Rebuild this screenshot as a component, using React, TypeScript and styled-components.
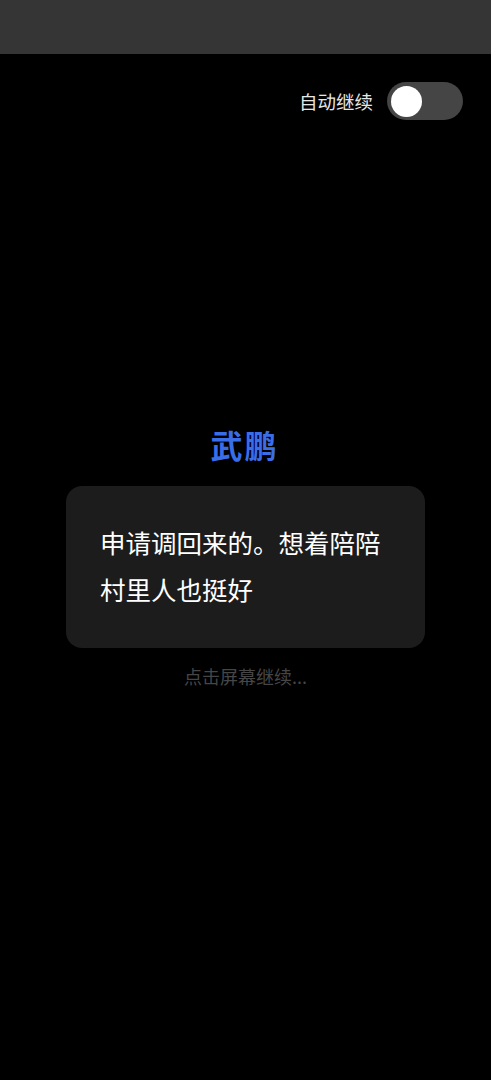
import React, { useState } from "react";
import styled, { createGlobalStyle } from "styled-components";

const GlobalStyle = createGlobalStyle`
  html, body {
    margin: 0;
    padding: 0;
    background: #000;
  }
  body {
    font-family: "Noto Sans CJK SC", "Noto Sans", sans-serif;
  }
`;

const Page = styled.div`
  width: 491px;
  height: 1080px;
  background: #000;
  display: flex;
  flex-direction: column;
  overflow: hidden;
`;

const TopBar = styled.div`
  height: 54px;
  background: #353535;
  flex-shrink: 0;
`;

const ToggleRow = styled.div`
  display: flex;
  justify-content: flex-end;
  align-items: center;
  gap: 14px;
  padding: 28px 28px 0 0;
`;

const ToggleLabel = styled.span`
  font-size: 18.5px;
  color: #e6e6e6;
  line-height: 38px;
`;

const Track = styled.button<{ $on: boolean }>`
  width: 76px;
  height: 38px;
  border-radius: 19px;
  border: none;
  padding: 0 4px;
  display: flex;
  align-items: center;
  justify-content: ${(p) => (p.$on ? "flex-end" : "flex-start")};
  background: ${(p) => (p.$on ? "#3a6ee8" : "#454545")};
  cursor: pointer;
`;

const Knob = styled.span`
  width: 31px;
  height: 31px;
  border-radius: 50%;
  background: #fff;
`;

const Stage = styled.div`
  display: flex;
  flex-direction: column;
  align-items: center;
  padding-top: 304px;
`;

const Speaker = styled.div`
  font-size: 32px;
  font-weight: 700;
  color: #3a6ee8;
  line-height: 40px;
  letter-spacing: 2px;
  margin-left: -2px;
`;

const Bubble = styled.div`
  margin-top: 22px;
  width: 359px;
  box-sizing: border-box;
  padding: 32px 38px 36px 34px;
  background: #1c1c1c;
  border-radius: 16px;
  font-size: 25.5px;
  line-height: 47px;
  color: #fff;
`;

const Hint = styled.div`
  margin-top: 16px;
  font-size: 18px;
  color: #464646;
  line-height: 24px;
`;

export default function App() {
  const [auto, setAuto] = useState(false);
  return (
    <Page>
      <GlobalStyle />
      <TopBar />
      <ToggleRow>
        <ToggleLabel>自动继续</ToggleLabel>
        <Track $on={auto} onClick={() => setAuto(!auto)}>
          <Knob />
        </Track>
      </ToggleRow>
      <Stage>
        <Speaker>武鹏</Speaker>
        <Bubble>申请调回来的。想着陪陪村里人也挺好</Bubble>
        <Hint>点击屏幕继续...</Hint>
      </Stage>
    </Page>
  );
}
